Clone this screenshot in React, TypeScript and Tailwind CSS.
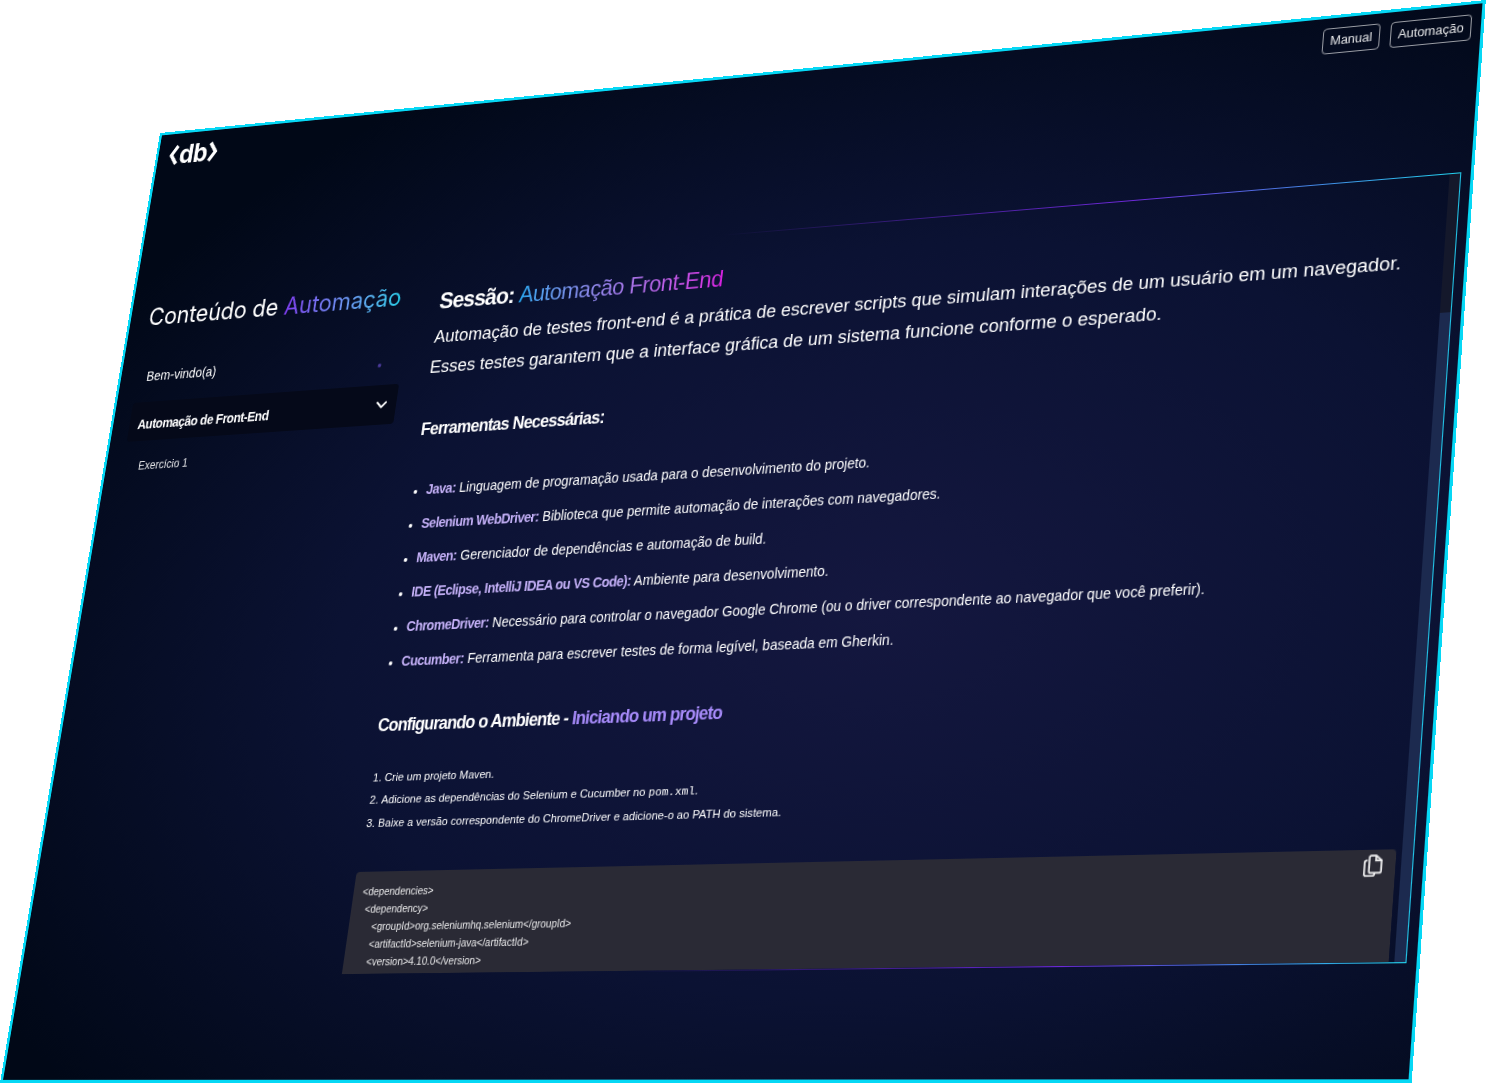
import { ChevronDown } from "lucide-react";

const PAGE_W = 1440;
const PAGE_H = 1000;

// Corners of the tilted page on screen: top-left, top-right, bottom-right, bottom-left
function tiltMatrix() {
  const [x0, y0, x1, y1, x2, y2, x3, y3] = [160, 133, 1486, 0, 1412, 1083, 0, 1083];
  const dx1 = x1 - x2;
  const dx2 = x3 - x2;
  const sx = x0 - x1 + x2 - x3;
  const dy1 = y1 - y2;
  const dy2 = y3 - y2;
  const sy = y0 - y1 + y2 - y3;
  const den = dx1 * dy2 - dx2 * dy1;
  const g = (sx * dy2 - dx2 * sy) / den;
  const h = (dx1 * sy - sx * dy1) / den;
  const a = x1 - x0 + g * x1;
  const b = x3 - x0 + h * x3;
  const d = y1 - y0 + g * y1;
  const e = y3 - y0 + h * y3;
  return `matrix3d(${a / PAGE_W},${d / PAGE_W},0,${g / PAGE_W},${b / PAGE_H},${e / PAGE_H},0,${h / PAGE_H},0,0,1,0,${x0},${y0},0,1)`;
}

const tools = [
  ["Java:", "Linguagem de programação usada para o desenvolvimento do projeto."],
  ["Selenium WebDriver:", "Biblioteca que permite automação de interações com navegadores."],
  ["Maven:", "Gerenciador de dependências e automação de build."],
  ["IDE (Eclipse, IntelliJ IDEA ou VS Code):", "Ambiente para desenvolvimento."],
  ["ChromeDriver:", "Necessário para controlar o navegador Google Chrome (ou o driver correspondente ao navegador que você preferir)."],
  ["Cucumber:", "Ferramenta para escrever testes de forma legível, baseada em Gherkin."],
];

function Logo() {
  return (
    <div className="flex items-center gap-[1px] text-white">
      <svg width="12" height="26" viewBox="0 0 12 26" fill="none" stroke="currentColor" strokeWidth="4">
        <path d="M10 3 3 13l7 10" />
      </svg>
      <span className="font-['Inter'] text-[28px] leading-7 font-bold tracking-tight">db</span>
      <svg width="12" height="26" viewBox="0 0 12 26" fill="none" stroke="currentColor" strokeWidth="4">
        <path d="m2 3 7 10-7 10" />
      </svg>
    </div>
  );
}

function Sidebar() {
  return (
    <aside className="w-[357px] shrink-0 pl-[20px] pr-[23px]">
      <h2 className="pl-[2px] pt-[20px] font-['Inter'] text-[25.5px] leading-9 font-normal whitespace-nowrap text-white">
        Conteúdo de{" "}
        <span className="bg-gradient-to-r from-[#7c3aed] to-[#22d3ee] bg-clip-text text-transparent">Automação</span>
      </h2>
      <div className="mt-[30px] flex h-[34px] items-center justify-between pl-[11px] pr-[24px] text-sm text-white">
        <span>Bem-vindo(a)</span>
        <span className="mt-[14px] size-1 rounded-full bg-[#4a3a9a]" />
      </div>
      <div className="mt-[11px] flex h-[42px] justify-between rounded bg-[#050919] pl-[10px] pr-[7px] text-sm font-semibold tracking-[-0.5px] text-white">
        <span className="pt-[14px]">Automação de Front-End</span>
        <ChevronDown size={20} strokeWidth={2.5} className="mt-[11px]" />
      </div>
      <div className="pl-[19px] pt-[19px] text-xs text-white/90">Exercício 1</div>
    </aside>
  );
}

function Article() {
  return (
    <article className="flex-1 overflow-hidden pl-[10px] pr-[5px] pt-[29px] text-white">
      <h1 className="text-2xl font-semibold tracking-[-1px]">
        Sessão:{" "}
        <span className="bg-gradient-to-r from-[#22a7f0] to-[#d61fe0] bg-clip-text font-normal tracking-[-0.5px] text-transparent">
          Automação Front-End
        </span>
      </h1>
      <p className="mt-[6px] text-[18.9px] leading-8">
        Automação de testes front-end é a prática de escrever scripts que simulam interações de um usuário em um navegador.
        <br />
        Esses testes garantem que a interface gráfica de um sistema funcione conforme o esperado.
      </p>
      <h3 className="mt-[35px] text-lg font-semibold tracking-[-0.8px]">Ferramentas Necessárias:</h3>
      <ul className="mt-[32px] list-disc pl-[16px] text-[14.1px] marker:text-xs">
        {tools.map(([label, text]) => (
          <li key={label} className="h-[35px] leading-[35px]">
            <span className="font-semibold tracking-[-0.55px] text-[#c4b0f7]">{label}</span> {text}
          </li>
        ))}
      </ul>
      <h3 className="mt-[32px] text-lg leading-7 font-semibold tracking-[-0.9px]">
        Configurando o Ambiente - <span className="text-[#a78bfa]">Iniciando um projeto</span>
      </h3>
      <ol className="mt-[27px] list-decimal pl-[16px] text-[11.6px] leading-[22px]">
        <li>Crie um projeto Maven.</li>
        <li>
          Adicione as dependências do Selenium e Cucumber no <code className="font-['Liberation_Mono']">pom.xml</code>.
        </li>
        <li>Baixe a versão correspondente do ChromeDriver e adicione-o ao PATH do sistema.</li>
      </ol>
      <div className="relative mt-[37px] h-[140px] rounded bg-[#2a2a35] px-[10px] pt-[11px] text-[10.5px] leading-[17px] text-white/90">
        <div>&lt;dependencies&gt;</div>
        <div className="pl-[5px]">&lt;dependency&gt;</div>
        <div className="pl-[15px]">&lt;groupId&gt;org.seleniumhq.selenium&lt;/groupId&gt;</div>
        <div className="pl-[15px]">&lt;artifactId&gt;selenium-java&lt;/artifactId&gt;</div>
        <div className="pl-[15px]">&lt;version&gt;4.10.0&lt;/version&gt;</div>
        <svg width="17" height="21" viewBox="0 0 20 24" fill="none" stroke="currentColor" strokeWidth="2" className="absolute right-[12px] top-[4px]">
          <path d="M4 6H3a2 2 0 0 0-2 2v12a2 2 0 0 0 2 2h7a2 2 0 0 0 2-2v-1" />
          <path d="M6 3a2 2 0 0 1 2-2h5l6 5v11a2 2 0 0 1-2 2H8a2 2 0 0 1-2-2z" />
          <path d="M13 1v5h6" />
        </svg>
      </div>
    </article>
  );
}

export default function App() {
  return (
    <div className="h-[1083px] w-[1486px] overflow-hidden bg-white font-['Liberation_Sans',sans-serif]">
      <div
        className="flex h-[1000px] w-[1440px] origin-top-left flex-col border-[3px] border-[#06d8f5] bg-[radial-gradient(ellipse_at_62%_56%,#14173f_0%,#0b1233_46%,#010817_86%)] pb-[100px] pr-[9px]"
        style={{ transform: tiltMatrix() }}
      >
        <header className="flex h-[166px] shrink-0 items-start justify-between pl-[13px] pt-[10px]">
          <Logo />
          <div className="flex gap-[10px] text-[12.5px] text-white/90">
            <button className="h-[26px] w-[56px] rounded border border-white/60">Manual</button>
            <button className="h-[26px] w-[78px] rounded border border-white/60">Automação</button>
          </div>
        </header>
        <div className="flex min-h-0 flex-1">
          <Sidebar />
          <section className="flex min-w-0 flex-1 flex-col">
            <div className="h-px shrink-0 bg-[linear-gradient(90deg,transparent_30%,#6d28d9_70%,#22d3ee)]" />
            <div className="flex min-h-0 flex-1">
              <Article />
              <div className="w-[10px] shrink-0 bg-[#14182b] pt-[134px]">
                <div className="h-full bg-[#1c2a4f]" />
              </div>
              <div className="w-px shrink-0 bg-[#22c4e8]" />
            </div>
            <div className="h-px shrink-0 bg-[linear-gradient(90deg,transparent_30%,#6d28d9_70%,#22d3ee)]" />
          </section>
        </div>
      </div>
    </div>
  );
}
